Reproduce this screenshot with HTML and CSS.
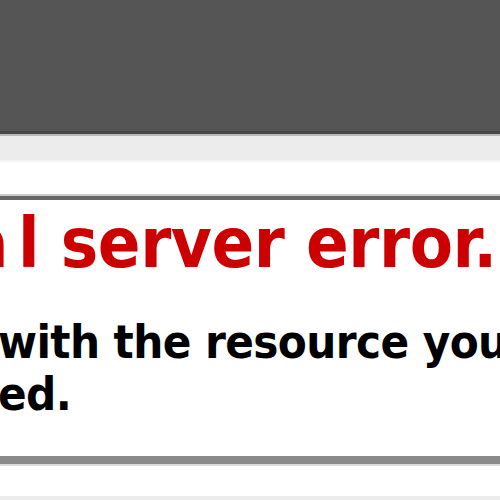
FILE: index.html
```html
<!DOCTYPE html>
<html lang="en">
<head>
<meta charset="utf-8">
<title>IIS 500 - Internal server error</title>
<link rel="stylesheet" href="styles.css">
</head>
<body>
<div class="header"></div>
<div class="header-edge"></div>
<div class="page">
  <div class="content">
    <fieldset class="box">
      <h2 class="title"><span class="lead">a</span>l server error.</h2>
      <h3 class="message">
        <span class="line">with the resource you</span>
        <span class="line">ed.</span>
      </h3>
    </fieldset>
  </div>
</div>
</body>
</html>
```
FILE: styles.css
```css
html, body {
  margin: 0;
  padding: 0;
  overflow: hidden;
  height: 500px;
  background: #ececec;
  font-family: "DejaVu Sans Condensed", "DejaVu Sans", Verdana, sans-serif;
}
.header {
  height: 131px;
  background: #555555;
}
.header-edge {
  height: 3px;
  background: #474747;
  border-bottom: 2px solid #b9b9b9;
  box-shadow: 0 2px 0 #fbfbfb;
}
.page {
  padding-top: 26px;
  background: linear-gradient(#ececec 0, #ececec 24px, #f4f4f4 24px);
}
.content {
  background: #ffffff;
  padding-top: 34px;
  padding-bottom: 32px;
}
.box {
  margin: 0;
  padding: 0 0 36px 0;
  min-width: 0;
  border: 0;
  border-top: 4px solid #666666;
  border-bottom: 8px solid #8a8a8a;
  box-shadow: 0 -2px 0 #cccccc, 0 2px 0 #dcdcdc;
}
.title {
  margin: 3px 0 0 -34px;
  font-size: 70px;
  line-height: 80px;
  font-weight: bold;
  letter-spacing: -0.4px;
  color: #cc0000;
  white-space: nowrap;
}
.lead {
  margin-right: 10px;
}
.message {
  margin: 33px 0 0 -2px;
  font-size: 47px;
  line-height: 52px;
  font-weight: bold;
  letter-spacing: -0.6px;
  color: #000000;
}
.line {
  display: block;
  white-space: nowrap;
}
```
